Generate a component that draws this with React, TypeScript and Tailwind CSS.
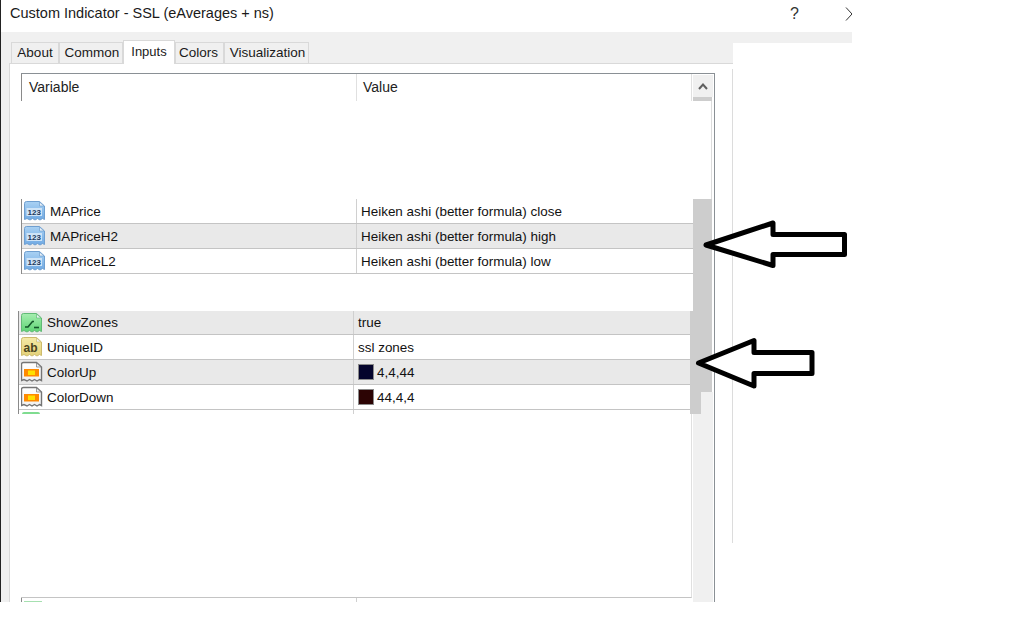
import React from "react";

const Doc = ({ fill, stroke, children, id, sw = 1 }: { fill: [string, string]; stroke: string; children?: React.ReactNode; id: string; sw?: number }) => (
  <svg width="22" height="22" viewBox="0 0 22 22" className="shrink-0">
    <defs>
      <linearGradient id={id} x1="0" y1="0" x2="0" y2="1">
        <stop offset="0" stopColor={fill[0]} />
        <stop offset="1" stopColor={fill[1]} />
      </linearGradient>
    </defs>
    <path
      d="M0.5 3.5 Q0.5 1.5 2.5 1.5 H15.5 L20.5 6 V19.5 L18.5 18.5 L16 20 L13.5 18.5 L11 20 L8.5 18.5 L6 20 L3 18.5 L0.5 19.5 Z"
      fill={`url(#${id})`}
      stroke={stroke}
      strokeWidth={sw}
    />
    <path d="M15.5 2 V6 H20 Z" fill="#eef3f7" stroke={stroke} strokeWidth="0.7" />
    {children}
  </svg>
);

const NumIcon = ({ id }: { id: string }) => (
  <Doc id={id} fill={["#a9d1f3", "#6fa9e3"]} stroke="#6f9fd0">
    <rect x="2.5" y="8" width="15.5" height="8" fill="#cfe4f7" />
    <text x="10.2" y="14.8" textAnchor="middle" fontSize="8" fontWeight="700" fontFamily="Liberation Sans, sans-serif" fill="#1d3a5c">123</text>
  </Doc>
);
const BoolIcon = ({ id }: { id: string }) => (
  <Doc id={id} fill={["#a6eeb0", "#5ed474"]} stroke="#62ba76">
    <path d="M4 15 H7 L11.5 9.5 H13" stroke="#14562a" strokeWidth="1.6" fill="none" />
    <path d="M13 15.5 H18" stroke="#14562a" strokeWidth="1.6" fill="none" />
  </Doc>
);
const StrIcon = ({ id }: { id: string }) => (
  <Doc id={id} fill={["#f5eaa6", "#e3d179"]} stroke="#cdbb6c">
    <text x="9.5" y="15.5" textAnchor="middle" fontSize="12" fontWeight="700" fontFamily="Liberation Sans, sans-serif" fill="#4a4420">ab</text>
  </Doc>
);
const ColorIcon = ({ id }: { id: string }) => (
  <Doc id={id} fill={["#ffffff", "#f1f1f1"]} stroke="#757575" sw={1.4}>
    <rect x="3" y="8" width="15" height="7.5" fill="#ff8a00" />
    <rect x="7" y="9.5" width="7" height="4.5" fill="#ffe000" />
  </Doc>
);

type Row = { name: string; value: string; icon: React.ReactNode; swatch?: string; shade?: boolean; h?: string };

const rowsA: Row[] = [
  { name: "MAPrice", value: "Heiken ashi (better formula) close", icon: <NumIcon id="n1" /> },
  { name: "MAPriceH2", value: "Heiken ashi (better formula) high", icon: <NumIcon id="n2" />, shade: true },
  { name: "MAPriceL2", value: "Heiken ashi (better formula) low", icon: <NumIcon id="n3" /> },
];
const rowsB: Row[] = [
  { name: "ShowZones", value: "true", icon: <BoolIcon id="b1" />, shade: true, h: "h-[24px]" },
  { name: "UniqueID", value: "ssl zones", icon: <StrIcon id="s1" /> },
  { name: "ColorUp", value: "4,4,44", icon: <ColorIcon id="c1" />, swatch: "#04042c", shade: true },
  { name: "ColorDown", value: "44,4,4", icon: <ColorIcon id="c2" />, swatch: "#2c0404" },
];

const DataRow = ({ row }: { row: Row }) => (
  <div className={`flex ${row.h ?? "h-[25px]"} w-[671px] items-center border-b border-[#c4c4c4] text-[13.45px] text-[#111] ${row.shade ? "bg-[#e9e9e9]" : "bg-white"}`}>
    <div className="flex w-[335px] items-center self-stretch border-r border-[#d0d0d0] pl-[2px]">
      {row.icon}
      <span className="ml-[4px] pt-[2px]">{row.name}</span>
    </div>
    <div className="flex items-center pl-[4px]">
      {row.swatch && (
        <span className="mr-[3px] h-[16px] w-[16px] border border-[#8a8a8a]" style={{ backgroundColor: row.swatch }} />
      )}
      <span className="pt-[2px]">{row.value}</span>
    </div>
  </div>
);

const tabs = [
  { t: "About", w: 48, c: "" },
  { t: "Common", w: 64, c: "pl-[2px]" },
  { t: "Inputs", w: 52, active: true, c: "" },
  { t: "Colors", w: 49, c: "pr-[2px]" },
  { t: "Visualization", w: 85, c: "pl-[2px]" },
];

const Arrow = ({ points }: { points: string }) => (
  <svg className="pointer-events-none absolute left-0 top-0" width="1025" height="624" viewBox="0 0 1025 624">
    <path d={points} fill="#ffffff" stroke="#000000" strokeWidth="5" strokeLinejoin="round" />
  </svg>
);

export default function App() {
  return (
    <div className="relative h-[624px] w-[1025px] overflow-hidden bg-white font-['Liberation_Sans',sans-serif]">
      <div className="flex h-[602px] w-[852px] flex-col overflow-hidden border-l border-[#222222]">
        <div className="flex h-[32px] shrink-0 items-center pb-[4px] pl-[9px] text-[14.5px] text-[#1a1a1a]">
          <span className="w-[265px] whitespace-nowrap">Custom Indicator - SSL (eAverages + ns)</span>
          <span className="ml-[516px] text-[16px] text-[#333]">?</span>
          <svg className="-mt-[1px] ml-[46px] shrink-0" width="8" height="16" viewBox="0 0 8 16">
            <path d="M1 1.5 L7 8 L1 14.5" fill="none" stroke="#333" strokeWidth="1" />
          </svg>
        </div>
        <div className="h-[11px] shrink-0 bg-[#f0f0f0]" />
        <div className="flex h-[20px] w-[732px] shrink-0 items-end bg-[#f0f0f0] pl-[10px] text-[13.5px] text-[#1a1a1a]">
          {tabs.map((tab) =>
            tab.active ? (
              <div key={tab.t} className="relative z-10 -mb-[1px] flex h-[24px] items-start justify-center border border-b-0 border-[#d9d9d9] bg-white pt-[1px] text-[13px]" style={{ width: tab.w }}>
                {tab.t}
              </div>
            ) : (
              <div key={tab.t} className={`flex h-[21px] items-center justify-center border border-b-0 border-[#d9d9d9] bg-[#f0f0f0] ${tab.c}`} style={{ width: tab.w }}>
                {tab.t}
              </div>
            )
          )}
        </div>
        <div className="flex min-h-0 w-[732px] flex-1 bg-[#f0f0f0] pl-[8px]">
          <div className="flex min-w-0 flex-1 border-l border-t border-[#d9d9d9] bg-white">
            <div className="ml-[11px] mt-[9px] flex w-[694px] border-r border-t border-[#8a9095]">
              <div className="flex w-[672px] flex-col">
                <div className="flex h-[27px] w-[671px] shrink-0 border-l border-r border-l-[#8a8a8a] border-r-[#e0e0e0] text-[14px] text-[#222]">
                  <div className="flex w-[335px] items-center border-r border-[#e0e0e0] pl-[7px]">Variable</div>
                  <div className="flex items-center pl-[6px]">Value</div>
                </div>
                <div className="h-[98px] shrink-0" />
                <div className="shrink-0 border-l border-[#8a8a8a]">
                  {rowsA.map((r) => <DataRow key={r.name} row={r} />)}
                </div>
                <div className="h-[37px] shrink-0" />
                <div className="-ml-[3px] h-[103px] shrink-0 overflow-hidden border-l border-[#8a8a8a]">
                  {rowsB.map((r) => <DataRow key={r.name} row={r} />)}
                  <div className="flex h-[25px] w-[671px] bg-white">
                    <div className="w-[335px] border-r border-[#d0d0d0] pl-[3px] pt-[2px]">
                      <div className="h-[6px] w-[18px] rounded-t-[2px] bg-[#7fdc90]" />
                    </div>
                  </div>
                </div>
                <div className="h-[184px] w-[671px] shrink-0 border-b border-r border-b-[#c4c4c4] border-r-[#e0e0e0]" />
                <div className="flex flex-1 overflow-hidden border-l border-[#8a8a8a]">
                  <div className="flex w-[335px] border-r border-[#d0d0d0] pl-[2px] pt-[3px]">
                    <div className="h-[1px] w-[18px] bg-[#a6e0b0]" />
                  </div>
                </div>
              </div>
              <div className="flex w-[21px] flex-col">
                <div className="h-[1px] shrink-0" />
                <div className="flex h-[22px] w-[20px] shrink-0 items-center justify-center bg-[#f0f0f0]">
                  <svg width="10" height="7" viewBox="0 0 10 7">
                    <path d="M1 6 L5 1.5 L9 6" fill="none" stroke="#606060" strokeWidth="2" />
                  </svg>
                </div>
                <div className="h-[4px] w-[19px] shrink-0 bg-[#cdcdcd]" />
                <div className="h-[98px] w-[19px] shrink-0 border-r border-[#dcdcdc]" />
                <div className="h-[112px] w-[19px] shrink-0 bg-[#cdcdcd]" />
                <div className="-ml-[3px] h-[81px] w-[22px] shrink-0 bg-[#cdcdcd]" />
                <div className="-ml-[3px] flex h-[22px] w-[23px] shrink-0">
                  <div className="w-[11px] bg-[#cdcdcd]" />
                  <div className="flex-1 bg-[#f0f0f0]" />
                </div>
                <div className="w-[20px] flex-1 bg-[#f0f0f0]" />
              </div>
            </div>
            <div className="ml-auto mt-[5px] h-[474px] w-[1px] bg-[#dcdcdc]" />
          </div>
        </div>
      </div>
      <Arrow points="M706 245 L773 223 V234.5 H844.5 V254.5 H773 V265.5 Z" />
      <Arrow points="M698.5 363 L754 340.5 V352.5 H812 V373.5 H754 V386 Z" />
    </div>
  );
}
